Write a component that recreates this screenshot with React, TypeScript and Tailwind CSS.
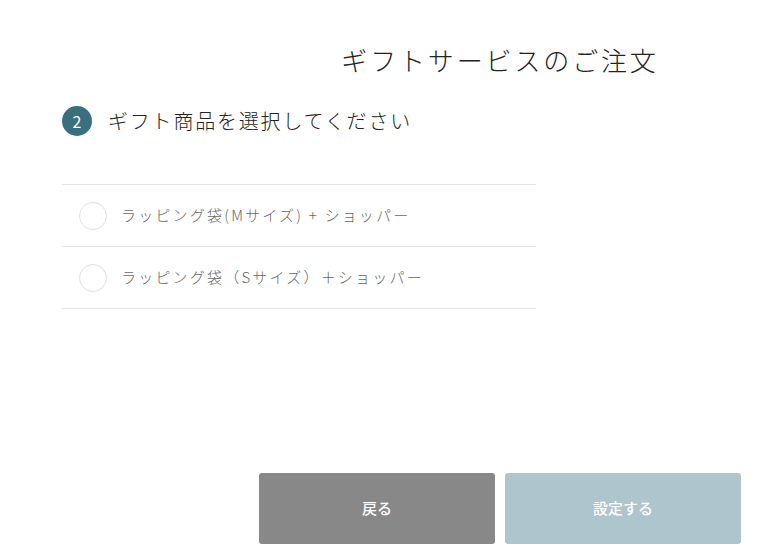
import { useState } from "react";

const options = [
  "ラッピング袋(Mサイズ) + ショッパー",
  "ラッピング袋（Sサイズ）＋ショッパー",
];

export default function App() {
  const [selected, setSelected] = useState<number | null>(null);

  return (
    <div className="w-[760px] h-[560px] bg-white flex flex-col font-['Noto_Sans_CJK_JP','Noto_Sans',sans-serif] text-[#222]">
      <div className="pt-[40px] pl-[259px] pr-[19px]">
        <h1 className="text-center text-[26px] leading-[40px] tracking-[0.11em] font-light">
          ギフトサービスのご注文
        </h1>
      </div>

      <div className="mt-[26px] pl-[62px] flex items-center gap-[16px]">
        <span className="w-[30px] h-[30px] rounded-full bg-[#3a6f80] text-white text-[16px] flex items-center justify-center">
          2
        </span>
        <h2 className="text-[20px] leading-[30px] tracking-[1.8px] font-light">
          ギフト商品を選択してください
        </h2>
      </div>

      <ul className="mt-[48px] ml-[62px] w-[474px] border-b border-[#e6e6e6]">
        {options.map((label, i) => (
          <li
            key={label}
            onClick={() => setSelected(i)}
            className="h-[62px] border-t border-[#e6e6e6] flex items-center pl-[17px] gap-[14px] cursor-pointer"
          >
            <span className="w-[28px] h-[28px] rounded-full border border-[#e0e0e0] flex items-center justify-center">
              {selected === i && (
                <span className="w-[14px] h-[14px] rounded-full bg-[#3a6f80]" />
              )}
            </span>
            <span className="text-[15px] tracking-[2.2px] text-[#666] font-light">{label}</span>
          </li>
        ))}
      </ul>

      <div className="mt-auto pb-[16px] pr-[19px] flex justify-end gap-[10px]">
        <button className="w-[236px] h-[71px] rounded-[3px] bg-[#888888] text-white text-[15px] font-medium">
          戻る
        </button>
        <button className="w-[236px] h-[71px] rounded-[3px] bg-[#afc5cd] text-white text-[15px] font-medium">
          設定する
        </button>
      </div>
    </div>
  );
}
